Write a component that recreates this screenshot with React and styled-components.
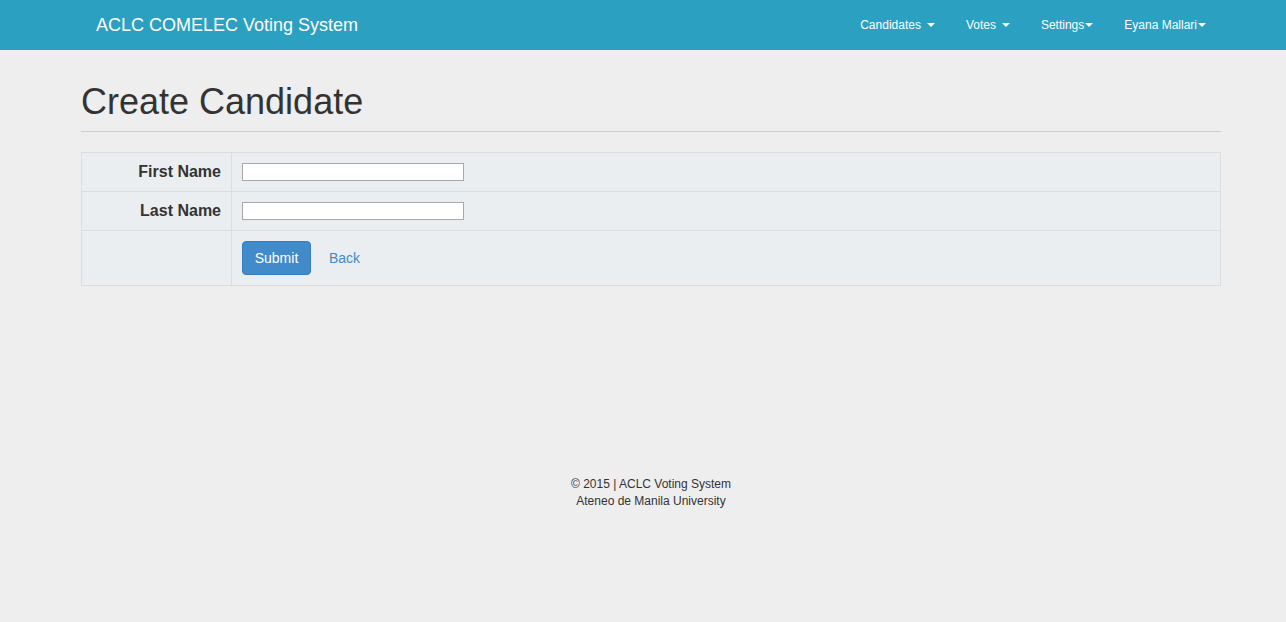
import React from 'react';
import styled, { createGlobalStyle } from 'styled-components';

// page basics
const GlobalStyle = createGlobalStyle`
  html, body {
    margin: 0;
    padding: 0;
    background: #eeeeee;
    font-family: "Liberation Sans", Arial, sans-serif;
    font-size: 14px;
    color: #333333;
  }
`;

const Navbar = styled.nav`
  height: 50px;
  background: #2ba0c0;
`;

const NavInner = styled.div`
  width: 1140px;
  margin: 0 auto 0 81px;
  height: 100%;
  display: flex;
  align-items: center;
  justify-content: space-between;
`;

const Brand = styled.a`
  color: #ffffff;
  font-size: 18px;
  padding: 0 15px;
  line-height: 50px;
  text-decoration: none;
`;

const NavList = styled.ul`
  list-style: none;
  margin: 0;
  padding: 0;
  display: flex;
`;

const NavItem = styled.li`
  color: #ffffff;
  font-size: 12px;
  line-height: 50px;
  padding: 0 15px 0 16px;
  display: flex;
  align-items: center;
`;

const Caret = styled.span`
  display: inline-block;
  width: 0;
  height: 0;
  margin-left: ${props => (props.$tight ? '1px' : '6px')};
  border-top: 4px solid #ffffff;
  border-left: 4px solid transparent;
  border-right: 4px solid transparent;
`;

const Container = styled.main`
  width: 1140px;
  margin-left: 81px;
`;

const PageHeader = styled.div`
  margin-top: 32px;
  padding-bottom: 9px;
  border-bottom: 1px solid #cccccc;
  margin-bottom: 20px;
`;

const Title = styled.h1`
  margin: 0;
  font-size: 36px;
  font-weight: 400;
  line-height: 1.1;
  color: #333333;
`;

const FormTable = styled.table`
  width: 100%;
  border-collapse: collapse;
  table-layout: fixed;
  background: #ebeef0;
`;

const Row = styled.tr``;

const LabelCell = styled.th`
  width: 150px;
  border: 1px solid #dddddd;
  padding: 0 10px;
  height: ${props => props.$h}px;
  text-align: right;
  font-size: 16px;
  font-weight: 700;
  box-sizing: border-box;
`;

const FieldCell = styled.td`
  border: 1px solid #dddddd;
  padding: 0 10px;
  height: ${props => props.$h}px;
  box-sizing: border-box;
`;

const TextInput = styled.input`
  display: block;
  width: 222px;
  height: 18px;
  box-sizing: border-box;
  border: 1px solid #a9a9a9;
  background: #ffffff;
  padding: 0 2px;
  font-family: inherit;
  font-size: 13px;
`;

const Actions = styled.div`
  display: flex;
  align-items: center;
  gap: 18px;
`;

const SubmitButton = styled.button`
  width: 69px;
  height: 34px;
  background: #428bca;
  border: 1px solid #357ebd;
  border-radius: 4px;
  color: #ffffff;
  font-family: inherit;
  font-size: 14px;
  padding: 0;
`;

const BackLink = styled.a`
  color: #428bca;
  font-size: 14px;
  text-decoration: none;
`;

const Footer = styled.footer`
  margin-top: 190px;
  text-align: center;
  font-size: 12px;
  line-height: 17px;
  color: #333333;
`;

const navItems = [
  { label: 'Candidates' },
  { label: 'Votes' },
  { label: 'Settings', tight: true },
  { label: 'Eyana Mallari', tight: true },
];

const App = () => {
  return (
    <>
      <GlobalStyle />
      <Navbar>
        <NavInner>
          <Brand href="#">ACLC COMELEC Voting System</Brand>
          <NavList>
            {navItems.map(item => (
              <NavItem key={item.label}>
                {item.label}
                <Caret $tight={item.tight} />
              </NavItem>
            ))}
          </NavList>
        </NavInner>
      </Navbar>
      <Container>
        <PageHeader>
          <Title>Create Candidate</Title>
        </PageHeader>
        <FormTable>
          <tbody>
            <Row>
              <LabelCell $h={39}>First Name</LabelCell>
              <FieldCell $h={39}><TextInput type="text" /></FieldCell>
            </Row>
            <Row>
              <LabelCell $h={39}>Last Name</LabelCell>
              <FieldCell $h={39}><TextInput type="text" /></FieldCell>
            </Row>
            <Row>
              <LabelCell $h={55} />
              <FieldCell $h={55}>
                <Actions>
                  <SubmitButton type="button">Submit</SubmitButton>
                  <BackLink href="#">Back</BackLink>
                </Actions>
              </FieldCell>
            </Row>
          </tbody>
        </FormTable>
        <Footer>
          © 2015 | ACLC Voting System<br />
          Ateneo de Manila University
        </Footer>
      </Container>
    </>
  );
};

export default App;
